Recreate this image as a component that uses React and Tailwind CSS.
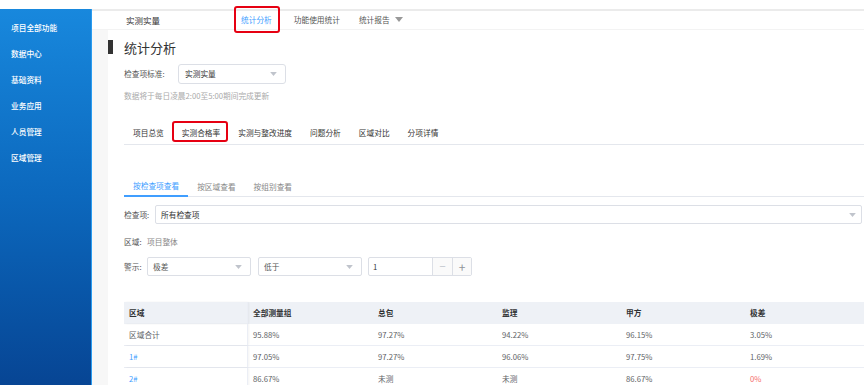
import React from 'react';

const font = { fontFamily: '"Noto Sans CJK SC", "Noto Sans", sans-serif' };

const Caret = ({ className = '' }) => (
  <svg viewBox="0 0 10 6" className={`w-[7px] h-[4px] ${className}`}>
    <path d="M0 0 L10 0 L5 6 Z" fill="#c0c4cc" />
  </svg>
);

const RedBox = ({ className = '' }) => (
  <span className={`absolute border-2 border-[#e60012] rounded-[3px] pointer-events-none ${className}`} />
);

const sideItems = ['项目全部功能', '数据中心', '基础资料', '业务应用', '人员管理', '区域管理'];
const tabs = ['项目总览', '实测合格率', '实测与整改进度', '问题分析', '区域对比', '分项详情'];
const subTabs = ['按检查项查看', '按区域查看', '按组别查看'];

const columns = [
  { title: '区域', w: 'w-[124px]' },
  { title: '全部测量组', w: 'w-[125px]' },
  { title: '总包', w: 'w-[124px]' },
  { title: '监理', w: 'w-[124px]' },
  { title: '甲方', w: 'w-[124px]' },
  { title: '极差', w: 'flex-1' },
];

const rows = [
  { area: '区域合计', link: false, values: ['95.88%', '97.27%', '94.22%', '96.15%', '3.05%'] },
  { area: '1#', link: true, values: ['97.05%', '97.27%', '96.06%', '97.75%', '1.69%'] },
  { area: '2#', link: true, values: ['86.67%', '未测', '未测', '86.67%', '0%'], warn: true },
];

const Select = ({ value, className = '' }) => (
  <div className={`h-[19px] border border-[#dcdfe6] rounded-[2px] bg-white flex items-center justify-between pl-[5px] pr-[8px] text-[#555] ${className}`}>
    <span>{value}</span>
    <Caret />
  </div>
);

export default function App() {
  return (
    <div className="w-[864px] h-[385px] overflow-hidden bg-white text-[7.7px] leading-none" style={font}>
      <div className="h-[9px] bg-white" />
      <div className="flex h-[376px]">
        {/* Sidebar */}
        <div className="w-[92px] shrink-0 h-full bg-gradient-to-b from-[#1888dd] via-[#0c68bd] to-[#074594] border-r border-[#2a9cf0] pt-[6px]">
          {sideItems.map((s) => (
            <div key={s} className="h-[26px] flex items-center pl-[11px] text-white font-medium">
              {s}
            </div>
          ))}
        </div>

        {/* Main */}
        <div className="flex-1 flex flex-col min-w-0">
          <div className="h-[2px] shrink-0 bg-[#ebebeb]" />
          <div className="h-[18px] shrink-0 border-b border-[#f3f3f3] flex items-center text-[#555] box-content">
            <span className="ml-[34px] text-[8.5px] text-[#333]">实测实量</span>
            <span className="relative ml-[81px] text-[#409eff]">
              统计分析
              <RedBox className="-left-[7px] -right-[8px] -top-[10px] -bottom-[9px]" />
            </span>
            <span className="ml-[22px]">功能使用统计</span>
            <span className="ml-[19px] flex items-center gap-[5px]">
              统计报告
              <svg viewBox="0 0 10 6" className="w-[8px] h-[5px]">
                <path d="M0 0 L10 0 L5 6 Z" fill="#999" />
              </svg>
            </span>
          </div>

          <div className="flex flex-1 min-h-0 overflow-hidden">
            <div className="w-[16px] bg-[#f7f7f7] shrink-0" />
            <div className="flex-1 min-w-0">
              {/* Title */}
              <div className="mt-[10px] h-[14px] flex items-center">
                <div className="w-[5px] h-[14px] bg-[#333]" />
                <span className="ml-[11px] text-[13px] text-[#333]">统计分析</span>
              </div>

              <div className="mt-[10px] h-[20px] flex items-center pl-[16px]">
                <span className="text-[#555] w-[54px]">检查项标准:</span>
                <div className="w-[108px] h-[20px] border border-[#dcdfe6] rounded-[3px] flex items-center justify-between pl-[6px] pr-[8px] text-[#333]">
                  <span>实测实量</span>
                  <Caret />
                </div>
              </div>

              <div className="mt-[6px] h-[12px] flex items-center pl-[16px] text-[#aaa]">
                数据将于每日凌晨2:00至5:00期间完成更新
              </div>

              {/* Tabs */}
              <div className="mt-[19px] ml-[16px] h-[24px] border-b border-[#e4e7ed] flex">
                {tabs.map((t, i) => (
                  <div key={t} className="relative h-full flex items-center px-[9px] text-[#333]">
                    {t}
                    {i === 1 && <RedBox className="-left-[1px] right-[1px] top-0 bottom-[2px]" />}
                  </div>
                ))}
              </div>

              {/* Sub tabs */}
              <div className="mt-[31px] ml-[16px] h-[21px] flex shadow-[inset_0_-1px_0_#e4e7ed]">
                {subTabs.map((t, i) => (
                  <div
                    key={t}
                    className={`h-full flex items-center px-[9px] ${
                      i === 0 ? 'text-[#409eff] border-b-2 border-[#409eff]' : 'text-[#888]'
                    }`}
                  >
                    {t}
                  </div>
                ))}
              </div>

              {/* Filters */}
              <div className="mt-[8px] ml-[16px] h-[19px] flex items-center">
                <span className="text-[#555] w-[31px]">检查项:</span>
                <div className="flex-1 mr-[2px] h-[19px] border border-[#dcdfe6] rounded-[2px] flex items-center justify-between pl-[5px] pr-[5px] text-[#333]">
                  <span>所有检查项</span>
                  <Caret />
                </div>
              </div>

              <div className="mt-[10px] ml-[16px] h-[16px] flex items-center">
                <span className="text-[#555] w-[23px]">区域:</span>
                <span className="text-[#888]">项目整体</span>
              </div>

              <div className="mt-[7px] ml-[16px] h-[19px] flex items-center">
                <span className="text-[#555] w-[23px]">警示:</span>
                <Select value="极差" className="w-[104px]" />
                <Select value="低于" className="w-[104px] ml-[7px]" />
                <div className="w-[104px] ml-[6px] h-[19px] border border-[#dcdfe6] rounded-[2px] flex items-center text-[#333]">
                  <span className="flex-1 pl-[4px]">1</span>
                  <span className="w-[20px] h-full border-l border-[#dcdfe6] bg-[#fafafa] flex items-center justify-center text-[#c0c4cc] text-[11px]">−</span>
                  <span className="w-[19px] h-full border-l border-[#dcdfe6] bg-[#fafafa] flex items-center justify-center text-[#909399] text-[12px]">+</span>
                </div>
              </div>

              {/* Table */}
              <div className="mt-[26px] ml-[16px]">
                <div className="h-[22px] flex bg-[#eef1f6] text-[#303133] font-bold">
                  {columns.map((c, i) => (
                    <div
                      key={c.title}
                      className={`${c.w} h-full flex items-center pl-[5px] ${i === 0 ? 'shadow-[1px_0_2px_rgba(0,0,0,0.05)] border-r border-[#ebeef5]' : ''}`}
                    >
                      {c.title}
                    </div>
                  ))}
                </div>
                {rows.map((r) => (
                  <div key={r.area} className="h-[22px] flex border-b border-[#ebeef5] text-[#606266]">
                    <div className={`${columns[0].w} h-full flex items-center pl-[5px] shadow-[1px_0_2px_rgba(0,0,0,0.05)] border-r border-[#ebeef5] ${r.link ? 'text-[#409eff]' : ''}`}>
                      {r.area}
                    </div>
                    {r.values.map((v, j) => (
                      <div
                        key={j}
                        className={`${columns[j + 1].w} h-full flex items-center pl-[5px] ${r.warn && j === 4 ? 'text-[#f56c6c]' : ''}`}
                      >
                        {v}
                      </div>
                    ))}
                  </div>
                ))}
              </div>
            </div>
          </div>
        </div>
      </div>
    </div>
  );
}
